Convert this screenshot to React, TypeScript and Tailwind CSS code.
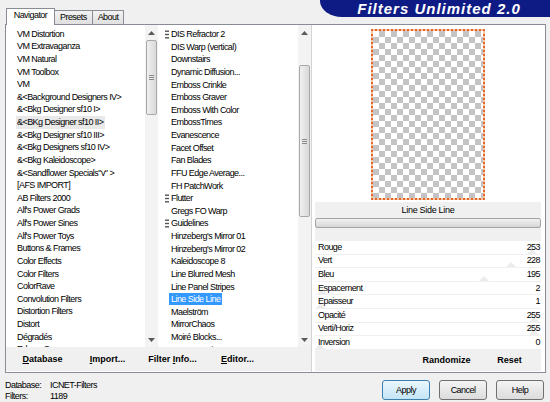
import React from 'react';

const leftItems = [
  'VM Distortion',
  'VM Extravaganza',
  'VM Natural',
  'VM Toolbox',
  'VM',
  '&<Background Designers IV>',
  '&<Bkg Designer sf10 I>',
  '&<BKg Designer sf10 II>',
  '&<Bkg Designer sf10 III>',
  '&<Bkg Designers sf10 IV>',
  '&<Bkg Kaleidoscope>',
  '&<Sandflower Specials"v" >',
  '[AFS IMPORT]',
  'AB Filters 2000',
  "Alf's Power Grads",
  "Alf's Power Sines",
  "Alf's Power Toys",
  'Buttons & Frames',
  'Color Effects',
  'Color Filters',
  'ColorRave',
  'Convolution Filters',
  'Distortion Filters',
  'Distort',
  'Dégradés',
  'Edges, Square',
];

const filterItems: { name: string; grip?: boolean }[] = [
  { name: 'DIS Refractor 2', grip: true },
  { name: 'DIS Warp (vertical)' },
  { name: 'Downstairs' },
  { name: 'Dynamic Diffusion...' },
  { name: 'Emboss Crinkle' },
  { name: 'Emboss Graver' },
  { name: 'Emboss With Color' },
  { name: 'EmbossTimes' },
  { name: 'Evanescence' },
  { name: 'Facet Offset' },
  { name: 'Fan Blades' },
  { name: 'FFU Edge Average...' },
  { name: 'FH PatchWork' },
  { name: 'Flutter', grip: true },
  { name: 'Gregs FO Warp' },
  { name: 'Guidelines', grip: true },
  { name: "Hinzeberg's Mirror 01" },
  { name: "Hinzeberg's Mirror 02" },
  { name: 'Kaleidoscope 8' },
  { name: 'Line Blurred Mesh' },
  { name: 'Line Panel Stripes' },
  { name: 'Line Side Line' },
  { name: 'Maelström' },
  { name: 'MirrorChaos' },
  { name: 'Moiré Blocks...' },
  { name: "MuRa's Meister" },
];

const params = [
  { label: 'Rouge', value: 253 },
  { label: 'Vert', value: 228 },
  { label: 'Bleu', value: 195 },
  { label: 'Espacement', value: 2 },
  { label: 'Epaisseur', value: 1 },
  { label: 'Opacité', value: 255 },
  { label: 'Verti/Horiz', value: 255 },
  { label: 'Inversion', value: 0 },
];

function Grip() {
  return (
    <svg width="4" height="9" viewBox="0 0 4 9" className="shrink-0">
      <rect x="0" y="0.5" width="4" height="1.4" fill="#555" />
      <rect x="0" y="3.8" width="4" height="1.4" fill="#555" />
      <rect x="0" y="7.1" width="4" height="1.4" fill="#555" />
    </svg>
  );
}

function ScrollBar({ thumbTop, thumbHeight }: { thumbTop: number; thumbHeight: number }) {
  return (
    <div className="flex w-[13px] shrink-0 flex-col bg-[#f3f3f3]">
      <div className="flex h-[15px] items-center justify-center">
        <svg width="7" height="4" viewBox="0 0 7 4">
          <path d="M0 4L3.5 0L7 4Z" fill="#5a5a5a" />
        </svg>
      </div>
      <div style={{ height: thumbTop }} />
      <div
        style={{ height: thumbHeight }}
        className="mx-[1px] flex flex-col items-center justify-center gap-[1px] rounded-[2px] border border-[#a8a8a8] bg-gradient-to-r from-[#f0f0f0] to-[#d9d9d9]"
      >
        <div className="h-px w-[5px] bg-[#8a8a8a]" />
        <div className="h-px w-[5px] bg-[#8a8a8a]" />
        <div className="h-px w-[5px] bg-[#8a8a8a]" />
      </div>
      <div className="flex-1" />
      <div className="flex h-[14px] items-center justify-center">
        <svg width="7" height="4" viewBox="0 0 7 4">
          <path d="M0 0L3.5 4L7 0Z" fill="#5a5a5a" />
        </svg>
      </div>
    </div>
  );
}

function Tab({ label, active }: { label: string; active?: boolean }) {
  if (active) {
    return (
      <div className="relative z-10 -mb-px flex h-[17px] w-[49px] items-start justify-center border border-b-0 border-[#898c95] bg-white pt-[1px]">
        {label}
      </div>
    );
  }
  return (
    <div className="flex h-[14px] items-start justify-center border border-b-0 border-l-0 border-[#898c95] bg-gradient-to-b from-[#f2f2f2] to-[#e0e0e0] px-[5px] pt-[1px]">
      {label}
    </div>
  );
}

function BarButton({ children }: { children: React.ReactNode }) {
  return <div className="w-[65px] text-center font-bold tracking-normal">{children}</div>;
}

function DialogButton({ label, focused }: { label: string; focused?: boolean }) {
  return (
    <div
      className={
        focused
          ? 'flex h-[20px] w-[48px] items-center justify-center rounded-[3px] border border-[#3c7fb1] bg-gradient-to-b from-[#eaf6fd] to-[#c4e5f6]'
          : 'flex h-[20px] w-[48px] items-center justify-center rounded-[3px] border border-[#707070] bg-gradient-to-b from-[#f4f4f4] to-[#dcdcdc]'
      }
    >
      {label}
    </div>
  );
}

export default function App() {
  return (
    <div className="h-[402px] w-[550px] overflow-hidden bg-[#f0f0f0] font-['Liberation_Sans',Arial,sans-serif] text-[9px] leading-[11px] tracking-[-0.55px] text-black">
      {/* header: tabs + title banner */}
      <div className="flex h-[24px]">
        <div className="flex items-end pl-[6px]">
          <Tab label="Navigator" active />
          <Tab label="Presets" />
          <Tab label="About" />
        </div>
        <div className="ml-auto flex h-[17px] w-[230px] items-center justify-center rounded-bl-[22px_16px] bg-[#0f1b85] pl-[8px] text-[15px] font-bold italic tracking-[1px] text-white">
          Filters Unlimited 2.0
        </div>
      </div>

      {/* tab panel */}
      <div className="ml-[5px] flex h-[349px] w-[541px] border border-[#898c95] bg-white">
        {/* left: category + filter lists */}
        <div className="flex w-[306px] flex-col border-r border-[#d4d4d4]">
          <div className="flex h-[322px]">
            <div className="w-[139px] overflow-hidden pl-[10px] pt-[2.7px]">
              {leftItems.map((item) => (
                <div key={item} className="h-[12.625px] whitespace-nowrap leading-[12.625px]">
                  <span
                    className={
                      item === '&<BKg Designer sf10 II>'
                        ? 'inline-block bg-[#e9e9e9] pl-[1px] pr-[2px]'
                        : 'inline-block pl-[1px] pr-[2px]'
                    }
                  >
                    {item}
                  </span>
                </div>
              ))}
            </div>
            <ScrollBar thumbTop={0} thumbHeight={75} />
            <div className="w-[140px] overflow-hidden pl-[7px] pt-[2.7px]">
              {filterItems.map((item) => (
                <div key={item.name} className="flex h-[12.625px] items-center whitespace-nowrap">
                  <div className="flex w-[4px] shrink-0 items-center">{item.grip && <Grip />}</div>
                  <span
                    className={
                      item.name === 'Line Side Line'
                        ? 'inline-block bg-[#3399ff] px-[2px] leading-[12px] text-white'
                        : 'inline-block px-[2px] leading-[12px]'
                    }
                  >
                    {item.name}
                  </span>
                </div>
              ))}
            </div>
            <ScrollBar thumbTop={25} thumbHeight={152} />
          </div>
          <div className="flex h-[24px] items-center bg-[#f0f0f0] pl-[4px]">
            <BarButton>
              <span className="underline">D</span>atabase
            </BarButton>
            <BarButton>
              <span className="underline">I</span>mport...
            </BarButton>
            <BarButton>
              Filter <span className="underline">I</span>nfo...
            </BarButton>
            <BarButton>
              <span className="underline">E</span>ditor...
            </BarButton>
          </div>
        </div>

        {/* right: preview + parameters */}
        <div className="flex w-[233px] flex-col pl-[3px] pr-[4px]">
          <div className="flex h-[177px] justify-center pt-[4px]">
            <div className="h-[171px] w-[114px] bg-[#f7c4a6]">
              <div className="h-full w-full border-2 border-dotted border-[#e2672c] bg-[conic-gradient(#c4c4c4_25%,#ffffff_0_50%,#c4c4c4_0_75%,#ffffff_0)] bg-[length:12px_12px] bg-clip-padding" />
            </div>
          </div>
          <div className="flex h-[16px] items-center justify-center bg-[#f0f0f0] tracking-[-0.3px]">Line Side Line</div>
          <div className="h-[10px] rounded-[2px] border border-[#a3a3a3] bg-gradient-to-b from-[#f2f2f2] to-[#d6d6d6]" />
          <div className="h-[13px] bg-[#f0f0f0]" />
          <div className="flex h-[109px] flex-col gap-[1px] bg-[#f0f0f0]">
            {params.map((p) => (
              <div key={p.label} className="relative flex h-[12.6px] items-center justify-between bg-white pl-[3px] pr-[1px]">
                <div
                  className="absolute bottom-0 h-0 w-0 border-x-[5px] border-b-[5px] border-x-transparent border-b-[#ececec]"
                  style={{ left: (p.value / 255) * 214 }}
                />
                <span className="relative">{p.label}</span>
                <span className="relative">{p.value}</span>
              </div>
            ))}
          </div>
          <div className="flex h-[21px] items-center justify-end bg-[#f0f0f0]">
            <div className="w-[63px] text-center font-bold tracking-normal">Randomize</div>
            <div className="w-[63px] text-center font-bold tracking-normal">Reset</div>
          </div>
        </div>
      </div>

      {/* status + dialog buttons */}
      <div className="flex pt-[7px]">
        <div className="pl-[5px]">
          <div className="flex">
            <div className="w-[45px]">Database:</div>
            <div>ICNET-Filters</div>
          </div>
          <div className="flex">
            <div className="w-[45px]">Filters:</div>
            <div>1189</div>
          </div>
        </div>
        <div className="ml-auto flex gap-[9px] pr-[6px]">
          <DialogButton label="Apply" focused />
          <DialogButton label="Cancel" />
          <DialogButton label="Help" />
        </div>
      </div>
    </div>
  );
}
